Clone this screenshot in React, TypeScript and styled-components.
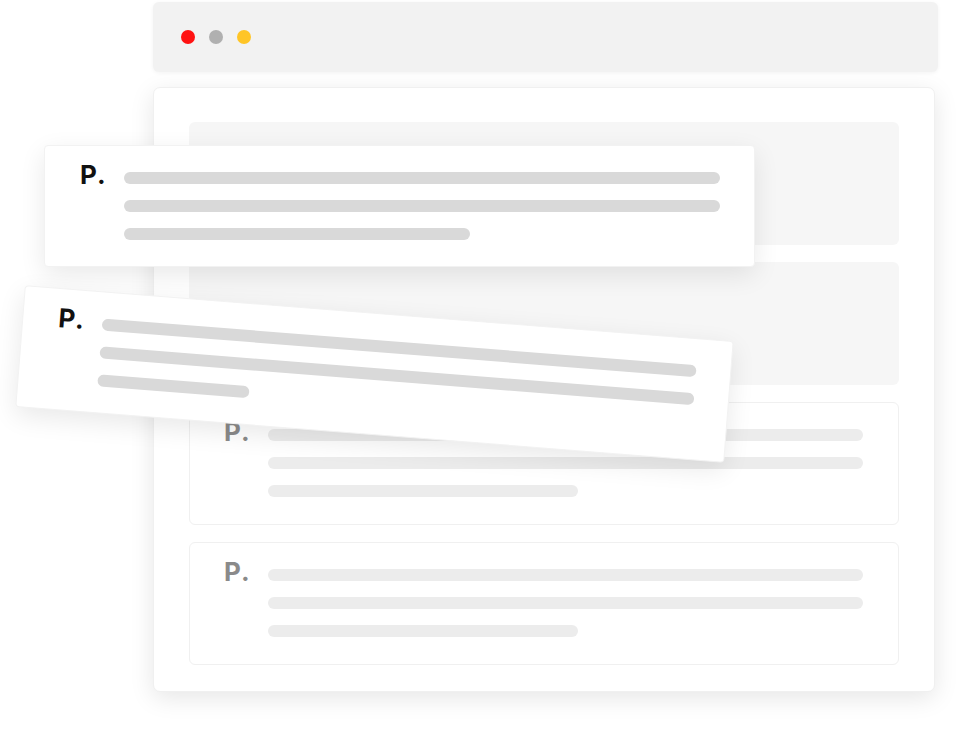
import React from "react";
import styled, { createGlobalStyle } from "styled-components";

const Global = createGlobalStyle`
  html, body { margin: 0; padding: 0; background: #ffffff; }
  body { font-family: "Inter", "Liberation Sans", sans-serif; }
`;

const Stage = styled.div`
  position: relative;
  width: 959px;
  height: 732px;
  overflow: hidden;
  background: #ffffff;
`;

const Browser = styled.div`
  display: flex;
  flex-direction: column;
  gap: 15px;
  padding: 2px 0 0 153px;
  width: 785px;
`;

const TitleBar = styled.div`
  height: 70px;
  background: #f2f2f2;
  border-radius: 6px;
  box-shadow: 0 1px 4px rgba(0, 0, 0, 0.05);
  display: flex;
  align-items: center;
  gap: 14px;
  padding-left: 28px;
`;

const Dot = styled.span<{ $color: string }>`
  width: 14px;
  height: 14px;
  border-radius: 50%;
  background: ${(p) => p.$color};
`;

const Panel = styled.div`
  width: 782px;
  box-sizing: border-box;
  background: #ffffff;
  border: 1px solid #f0f0f0;
  border-radius: 7px;
  box-shadow: 0 6px 24px rgba(0, 0, 0, 0.1);
  padding: 34px 35px 26px 35px;
  display: flex;
  flex-direction: column;
  gap: 17px;
`;

const Block = styled.div`
  height: 123px;
  background: #f6f6f6;
  border-radius: 6px;
`;

const Card = styled.div<{ $float?: boolean }>`
  box-sizing: border-box;
  height: ${(p) => (p.$float ? "122px" : "123px")};
  width: ${(p) => (p.$float ? "711px" : "auto")};
  background: #ffffff;
  border-radius: ${(p) => (p.$float ? "4px" : "6px")};
  border: ${(p) => (p.$float ? "1px solid #f2f2f2" : "1px solid #f0f0f0")};
  box-shadow: ${(p) => (p.$float ? "0 8px 26px rgba(0, 0, 0, 0.09)" : "none")};
  display: flex;
  padding: ${(p) => (p.$float ? "26px 34px 0 35px" : "26px 34px 0 34px")};
`;

const FloatCard = styled(Card)<{ $left: number; $top: number; $rot: number }>`
  position: absolute;
  left: ${(p) => p.$left}px;
  top: ${(p) => p.$top}px;
  transform: rotate(${(p) => p.$rot}deg);
`;

const Mark = styled.div<{ $muted?: boolean }>`
  width: 44px;
  flex: none;
  font-size: 26px;
  line-height: 26px;
  font-weight: 700;
  margin-top: -10px;
  color: ${(p) => (p.$muted ? "#8a8a8a" : "#111111")};
  letter-spacing: 1px;
`;

const Lines = styled.div`
  display: flex;
  flex-direction: column;
  gap: 16px;
`;

const Line = styled.div<{ $w: number; $muted?: boolean }>`
  height: 12px;
  width: ${(p) => p.$w}px;
  border-radius: 6px;
  background: ${(p) => (p.$muted ? "#ececec" : "#d9d9d9")};
`;

const CardBody: React.FC<{ muted?: boolean; full: number; last: number }> = ({ muted, full, last }) => (
  <>
    <Mark $muted={muted}>P.</Mark>
    <Lines>
      <Line $w={full} $muted={muted} />
      <Line $w={full} $muted={muted} />
      <Line $w={last} $muted={muted} />
    </Lines>
  </>
);

export default function App() {
  return (
    <>
      <Global />
      <Stage>
        <Browser>
          <TitleBar>
            <Dot $color="#ff1212" />
            <Dot $color="#b0b0b0" />
            <Dot $color="#ffc526" />
          </TitleBar>
          <Panel>
            <Block />
            <Block />
            <Card>
              <CardBody muted full={595} last={310} />
            </Card>
            <Card>
              <CardBody muted full={595} last={310} />
            </Card>
          </Panel>
        </Browser>
        <FloatCard $float $left={44} $top={145} $rot={0}>
          <CardBody full={596} last={346} />
        </FloatCard>
        <FloatCard $float $left={19} $top={313} $rot={4.5}>
          <CardBody full={596} last={152} />
        </FloatCard>
      </Stage>
    </>
  );
}
